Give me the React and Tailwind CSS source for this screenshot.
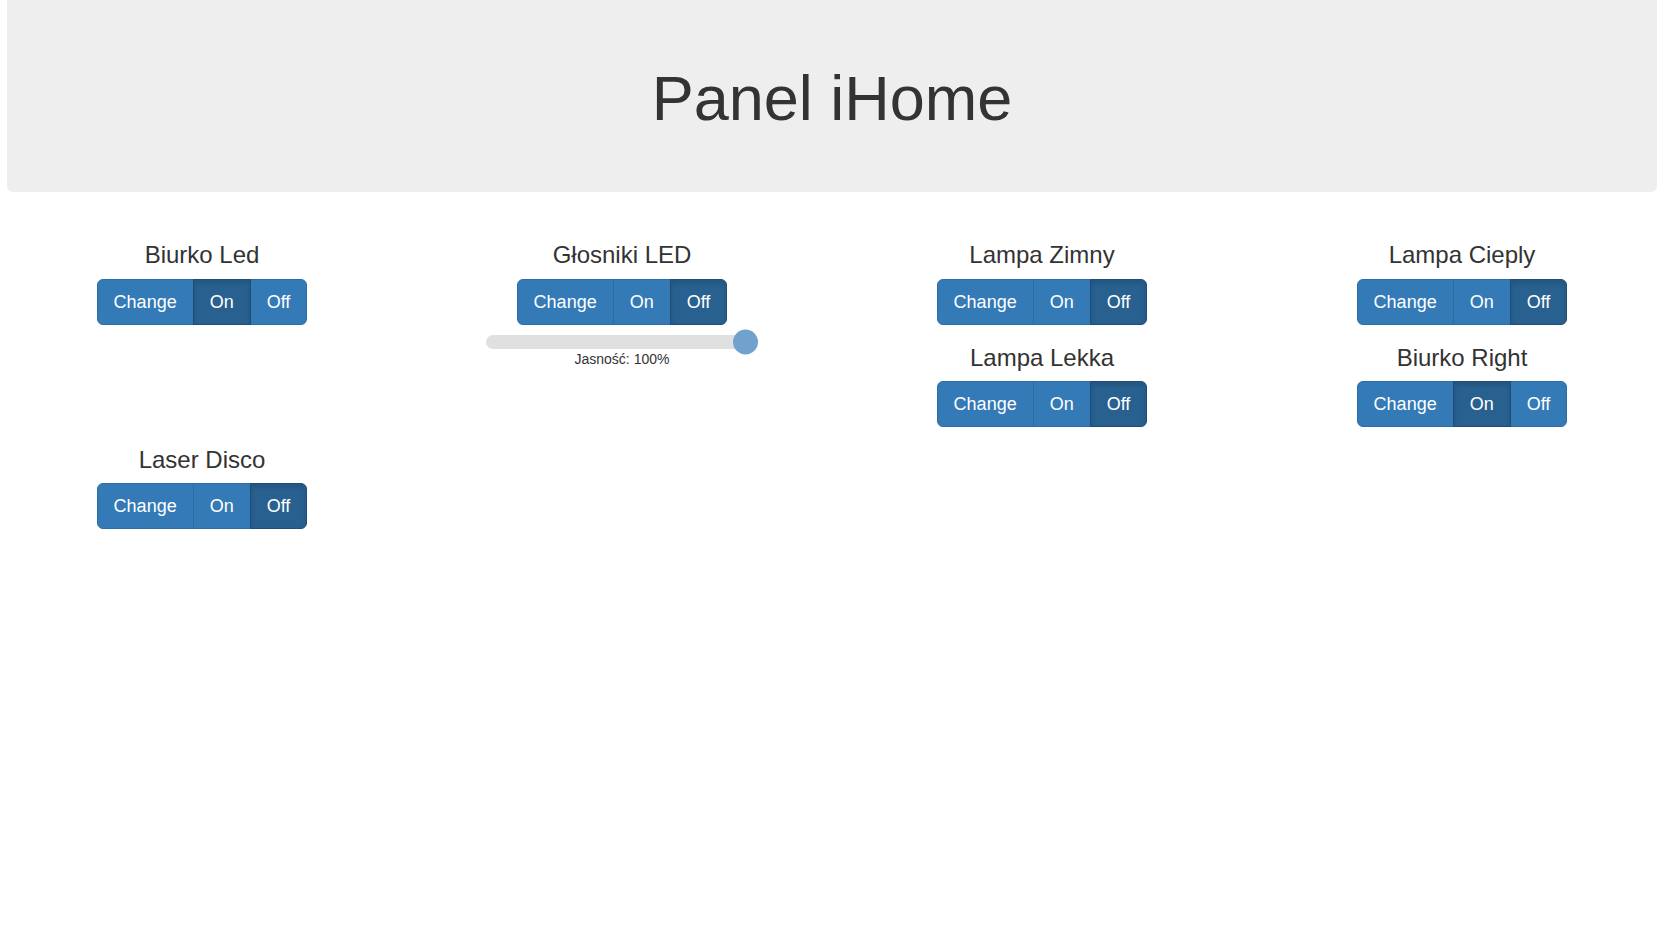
import React from "react";

const FONT = { fontFamily: '"Liberation Sans", Arial, Helvetica, sans-serif' };

function BtnGroup({ active }) {
  const labels = ["Change", "On", "Off"];
  return (
    <div className="inline-flex align-middle">
      {labels.map((l, i) => {
        const isActive = active === l;
        const base =
          "px-[16px] py-[10px] text-[18px] leading-[1.3333333] text-white border relative";
        const color = isActive
          ? "bg-[#286090] border-[#204d74] shadow-[inset_0_3px_5px_rgba(0,0,0,0.125)] z-10"
          : "bg-[#337ab7] border-[#2e6da4]";
        const shape =
          i === 0
            ? "rounded-l-[6px]"
            : i === labels.length - 1
            ? "rounded-r-[6px] -ml-px"
            : "-ml-px";
        return (
          <button key={l} className={`${base} ${color} ${shape}`} style={FONT}>
            {l}
          </button>
        );
      })}
    </div>
  );
}

function Device({ name, active, slider }) {
  return (
    <div className="text-center">
      <h3 className="mt-[20px] mb-[10px] text-[24px] leading-[1.1] text-[#333] font-normal">
        {name}
      </h3>
      <BtnGroup active={active} />
      {slider && (
        <div>
          <div className="relative mx-auto mt-[10.5px] h-[14px] w-[272px] rounded-full bg-[#e0e0e0]">
            <div className="absolute right-0 top-1/2 h-[25px] w-[25px] -translate-y-1/2 rounded-full bg-[#70a2cd]" />
          </div>
          <div className="mt-0 text-[14px] leading-[20px] text-[#333]">
            Jasność: 100%
          </div>
        </div>
      )}
    </div>
  );
}

export default function App() {
  return (
    <div className="min-h-[938px] bg-white pl-[7px] pr-[9px]" style={FONT}>
      <div className="mb-[30px] rounded-b-[6px] bg-[#eeeeee] px-[60px] pt-[44px] pb-[49px] text-center">
        <h1 className="mt-[20px] mb-[10px] text-[63px] leading-[1.1] font-normal text-[#333]">
          Panel iHome
        </h1>
      </div>
      <div className="mx-[-15px]">
        <div className="grid grid-cols-4 items-start">
          <div className="px-[15px]">
            <Device name="Biurko Led" active="On" />
          </div>
          <div className="px-[15px]">
            <Device name="Głosniki LED" active="Off" slider />
          </div>
          <div className="px-[15px]">
            <Device name="Lampa Zimny" active="Off" />
            <Device name="Lampa Lekka" active="Off" />
          </div>
          <div className="px-[15px]">
            <Device name="Lampa Cieply" active="Off" />
            <Device name="Biurko Right" active="On" />
          </div>
        </div>
        <div className="grid grid-cols-4 items-start">
          <div className="px-[15px]">
            <Device name="Laser Disco" active="Off" />
          </div>
        </div>
      </div>
    </div>
  );
}
